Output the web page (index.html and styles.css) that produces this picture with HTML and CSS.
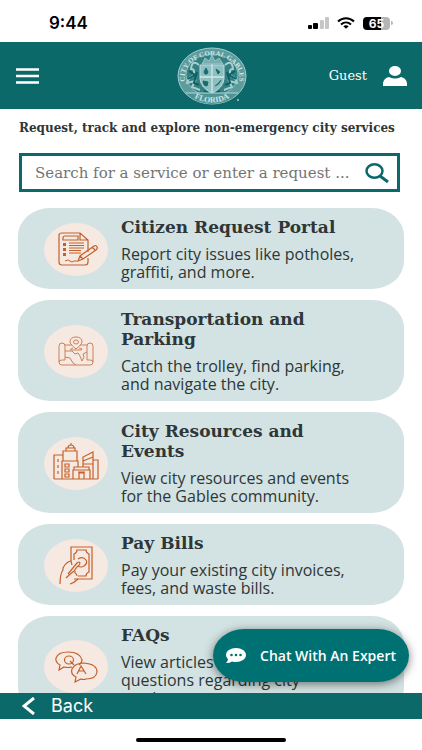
FILE: index.html
```html
<!DOCTYPE html>
<html lang="en">
<head>
    <meta charset="UTF-8">
    <meta name="viewport" content="width=device-width, initial-scale=1.0">
    <title>City of Coral Gables</title>
    <link rel="stylesheet" href="styles.css">
</head>
<body>
    <div class="status-bar">
        <span class="time">9:44</span>
        <div class="status-icons">
            <svg width="21" height="12" viewBox="0 0 21 12">
                <rect x="0" y="8" width="4" height="4" rx="1" fill="#000"/>
                <rect x="5" y="6" width="5" height="6" rx="1" fill="#000"/>
                <rect x="12" y="3" width="4" height="9" rx="1" fill="#c6c6c6"/>
                <rect x="17" y="0" width="4" height="12" rx="1" fill="#c6c6c6"/>
            </svg>
            <svg width="18" height="12" viewBox="0 0 18 12" fill="none" stroke="#000" stroke-width="2">
                <path d="M1 4.500C5.500 0 12.500 0 17 4.500M4 7.500C7 4.700 11 4.700 14 7.500"/>
                <path d="M6.300 9.200C8 7.900 10 7.900 11.700 9.200L9 11.800Z" fill="#000" stroke="none"/>
            </svg>
            <div class="battery"><span>65</span></div>
        </div>
    </div>

    <header class="header">
        <button class="menu-button" aria-label="Menu">
            <svg width="23" height="16" viewBox="0 0 23 16" stroke="#fff" stroke-width="2.500"><path d="M0 1.500H23M0 8H23M0 14.500H23"/></svg>
        </button>
        <svg class="seal" width="70" height="58" viewBox="0 0 70 58">
            <defs>
                <path id="ring-top" d="M8.500 37A27.500 22.500 0 1 1 61.500 37"/>
                <path id="ring-bottom" d="M14 49Q35 62 56 49"/>
            </defs>
            <ellipse cx="35" cy="29" rx="34" ry="28" fill="#5b9c9d" stroke="#a4cccd"/>
            <ellipse cx="35" cy="28" rx="26" ry="21" fill="#347f81" stroke="#9bc6c7" stroke-width=".8"/>
            <text class="seal-text"><textPath href="#ring-top" startOffset="50%" text-anchor="middle">CITY OF CORAL GABLES</textPath></text>
            <path d="M23 18H47V32Q46 41 35 46Q24 41 23 32Z" fill="#8dbfc0" stroke="#c0dcdd"/>
            <path d="M35 10V46M23 30H47" stroke="#d2e8e8" stroke-width="1.300"/>
            <path d="M27 25l2-4 2 4-1 2h-2zM39 22l4 3-2 2zM26 34l5 1-1 4-3-1zM38 39q4-1 6-6" fill="#176c6e" stroke="#176c6e"/>
            <path d="M25 17L28 11L32 14L35 8L38 14L42 11L46 17Z" fill="#74aeaf" stroke="#b1d3d4" stroke-width=".7"/>
            <path d="M22 18Q15 12 14 22Q19 22 16 29Q11 31 10 36L18 34L15 40L23 43M48 18Q55 12 56 22Q51 22 54 29Q59 31 60 36L52 34L55 40L47 43" fill="none" stroke="#a6cecf" stroke-width="2"/>
            <path d="M12 24l6 4-7 4M20 25l-3 11 5 2M58 24l-6 4 7 4M50 25l3 11-5 2M27 44l4 2M43 44l-4 2" fill="none" stroke="#0b6264" stroke-width="2"/>
            <path d="M9 46H61Q51 57 35 57Q19 57 9 46Z" fill="#4f9394"/>
            <path d="M9 46H61" stroke="#b8d8d9"/>
            <text class="seal-text seal-state"><textPath href="#ring-bottom" startOffset="50%" text-anchor="middle">FLORIDA</textPath></text>
            <circle cx="61" cy="53" r="1" fill="#a4cccd"/>
        </svg>
        <a class="guest" href="#">
            <span>Guest</span>
            <svg width="24" height="20" viewBox="0 0 24 20" fill="#fff"><ellipse cx="12" cy="5" rx="6" ry="5"/><path d="M0 20V17Q1 12 6 11Q12 14 18 11Q23 12 24 17V20Z"/></svg>
        </a>
    </header>

    <main class="content">
        <section class="search-section">
            <h1 class="intro"><label for="search">Request, track and explore non-emergency city services</label></h1>
            <form class="search-box">
                <input id="search" type="text" placeholder="Search for a service or enter a request ...">
                <button type="button" aria-label="Search">
                    <svg width="24" height="20" viewBox="0 0 24 20" fill="none" stroke="#0b696a" stroke-width="2.500"><ellipse cx="9.500" cy="8" rx="8" ry="6.700"/><path d="M15 13L23 19" stroke-width="3"/></svg>
                </button>
            </form>
        </section>

        <section class="cards">
            <a class="card" href="#">
                <span class="card-icon">
                    <svg width="64" height="53" viewBox="0 0 64 53">
                        <path d="M44 35V39Q44 42 41 42H18Q15 42 15 39V12Q15 10 18 10H36L44 17V29M36 10V17H44M34 13H21Q19 13 19 15V17H34Z"/>
                        <path d="M25 20H40M25 22.500H40M25 25H40M25 27.500H37M25 30H37M21 38Q24 36 26 38T30 38H33" stroke-width="1"/>
                        <path class="solid" d="M19 20h3v3h-3zM19 25h3v3h-3zM19 30h3v3h-3z"/>
                        <path d="M34 38L36 33L50 23Q52 22 53 24Q54 25 52 27L39 36ZM36 33L39 36M48 24L51 27"/>
                    </svg>
                </span>
                <span class="card-text">
                    <span class="card-title">Citizen Request Portal</span>
                    <span class="card-description">Report city issues like potholes, graffiti, and more.</span>
                </span>
            </a>
            <a class="card" href="#">
                <span class="card-icon">
                    <svg class="thin" width="64" height="53" viewBox="0 0 64 53">
                        <path d="M21 21Q21 18 18 18Q15 18 15 21V37Q15 40 18 40H46Q49 40 49 37V21Q49 18 46 18Q43 18 43 21V35M21 21V35M15 37Q15 35 18 35H21M49 37Q49 35 46 35H43M21 20H28M36 20H43"/>
                        <path d="M32 24Q26 19 26 17Q26 12 32 12Q38 12 38 17Q38 19 32 24Z"/><ellipse cx="32" cy="17" rx="2.500" ry="2"/>
                        <path d="M29 23Q24 25 28 25H37Q40 24 35 23M21 26H28L31 29L34 28L36 31L38 36L40 32L39 29L43 27M21 32L26 33L29 38L32 40"/>
                    </svg>
                </span>
                <span class="card-text">
                    <span class="card-title">Transportation and Parking</span>
                    <span class="card-description">Catch the trolley, find parking, and navigate the city.</span>
                </span>
            </a>
            <a class="card" href="#">
                <span class="card-icon">
                    <svg width="64" height="53" viewBox="0 0 64 53">
                        <path d="M10 42H54M10 42V18H19V24M14 22V25M14 28V31M14 34V37M19 18V14H33V24M22 14V11H31V14M24 11Q24 8 27 8Q30 8 30 11M27 8V6"/>
                        <path d="M18 42V24H34V30M21 27H25V30H21ZM21 32H25V35H21ZM21 37H25V40H21Z"/>
                        <path d="M29 42V33H46V42M30 30H45V33H30ZM34 35H41M35 42V36H40V42M39 30V20L49 15V42M39 24L49 20M39 27H49M49 23H54V42"/>
                    </svg>
                </span>
                <span class="card-text">
                    <span class="card-title">City Resources and Events</span>
                    <span class="card-description">View city resources and events for the Gables community.</span>
                </span>
            </a>
            <a class="card" href="#">
                <span class="card-icon">
                    <svg width="64" height="53" viewBox="0 0 64 53">
                        <path d="M27 22V8H48V40H30M30 21V15Q33 14 33 11H42Q42 14 45 15V33Q42 34 42 37H34M31 32V34Q33 35 33 37"/>
                        <path d="M16 45Q16 35 19 31V29Q22 23 27 22L28 26M24 35L33 24Q35 22 36 24Q36 26 33 28L30 32Q26 35 22 39M34 20Q39 17 42 21Q44 24 40 27Q37 29 34 27M26 45Q30 44 34 40"/>
                    </svg>
                </span>
                <span class="card-text">
                    <span class="card-title">Pay Bills</span>
                    <span class="card-description">Pay your existing city invoices, fees, and waste bills.</span>
                </span>
            </a>
            <a class="card" href="#">
                <span class="card-icon">
                    <svg width="64" height="53" viewBox="0 0 64 53">
                        <path d="M28 27Q24 28 20 27L15 30L16 25Q11 22 12 18Q14 12 24 12Q36 12 38 20Q38 23 35 25"/>
                        <path d="M40 23Q53 24 53 32Q52 39 42 39Q39 40 37 39L31 42L32 37Q26 34 28 29Q31 23 40 23Z"/>
                        <ellipse cx="25" cy="20" rx="4.500" ry="4"/><path d="M26 21L30 25M33 34L37 26L42 34M35 31H40"/>
                    </svg>
                </span>
                <span class="card-text">
                    <span class="card-title">FAQs</span>
                    <span class="card-description">View articles and common questions regarding city services.</span>
                </span>
            </a>
        </section>

        <button class="chat-button">
            <svg width="20" height="16" viewBox="0 0 20 16"><path fill="#fff" d="M10 0C4.500 0 0 3 0 7Q0 9.500 2 11.300Q2 13 0 15Q4 15 6 13.500Q8 14 10 14C15.500 14 20 11 20 7S15.500 0 10 0Z"/><g fill="#007172"><circle cx="5.500" cy="7" r="1.300"/><circle cx="10" cy="7" r="1.300"/><circle cx="14.500" cy="7" r="1.300"/></g></svg>
            Chat With An Expert
        </button>
    </main>

    <nav class="back-bar">
        <a href="#">
            <svg width="13" height="18" viewBox="0 0 13 18" fill="none" stroke="#fff" stroke-width="3"><path d="M12 1L2 9L12 17"/></svg>
            Back
        </a>
    </nav>
    <div class="home-area"><div class="home-indicator"></div></div>
</body>
</html>
```
FILE: styles.css
```css
* {
    box-sizing: border-box;
}
body {
    display: flex;
    flex-direction: column;
    height: 100vh;
    margin: 0;
    background-color: #fff;
    color: #2e3637;
    font-family: "Open Sans", sans-serif;
}
button {
    padding: 0;
    border: 0;
    background: none;
    cursor: pointer;
}
a {
    color: inherit;
    text-decoration: none;
}
svg {
    display: block;
    flex-shrink: 0;
}

/* Status bar */
.status-bar {
    display: flex;
    flex-shrink: 0;
    justify-content: space-between;
    align-items: center;
    height: 42px;
    padding: 4px 32px 0 49px;
}
.time {
    color: #000;
    font: 600 17px/20px Inter, sans-serif;
}
.status-icons {
    display: flex;
    align-items: center;
    gap: 8px;
}
.battery {
    position: relative;
    width: 27px;
    height: 13px;
    border-radius: 4px;
    background: linear-gradient(to right, #000 65%, #b5b5b5 65%);
    color: #fff;
    font: 700 12px/13px Inter, sans-serif;
    text-align: center;
}
.battery::after {
    content: "";
    position: absolute;
    top: 4px;
    right: -3px;
    width: 2px;
    height: 4px;
    border-radius: 0 2px 2px 0;
    background-color: #b5b5b5;
}

/* Header */
.header {
    display: grid;
    grid-template-columns: 1fr auto 1fr;
    flex-shrink: 0;
    align-items: center;
    height: 67px;
    padding: 0 15px 0 16px;
    background-color: #0b696a;
    color: #fff;
}
.menu-button {
    justify-self: start;
}
.seal-text {
    fill: #d2e6e6;
    font: bold 7px "Liberation Serif", serif;
}
.seal-state {
    font-size: 8px;
}
.guest {
    display: flex;
    justify-self: end;
    align-items: center;
    gap: 16px;
    font: 13px/20px "DejaVu Serif", serif;
}

/* Search */
.content {
    position: relative;
    flex: 1;
    min-height: 0;
    overflow: hidden;
}
.search-section {
    padding: 9px 22px 16px 19px;
}
.intro {
    margin: 0 0 15px;
    font: bold 12px/20px "DejaVu Serif", serif;
    white-space: nowrap;
}
.search-box {
    display: flex;
    align-items: center;
    height: 39px;
    padding: 0 8px 0 13px;
    border: 3px solid #0b696a;
    background-color: #fff;
}
.search-box input {
    flex: 1;
    min-width: 0;
    padding: 0;
    border: 0;
    outline: 0;
    background: none;
    font: 15px/20px "DejaVu Serif", serif;
}
.search-box input::placeholder {
    color: #747474;
    opacity: 1;
}

/* Cards */
.cards {
    display: flex;
    flex-direction: column;
    gap: 11px;
    padding: 0 18px;
}
.card {
    display: flex;
    align-items: center;
    gap: 13px;
    padding: 9px 42px 8px 26px;
    border-radius: 32px / 28px;
    background-color: #d3e2e2;
}
.card-icon {
    flex-shrink: 0;
    border-radius: 50%;
    background-color: #f6e9e2;
}
.card-icon svg {
    fill: none;
    stroke: #c4602a;
    stroke-width: 1.2;
}
.card-icon .thin {
    stroke: #cc8059;
    stroke-width: 1;
}
.card-icon .solid {
    fill: #c4602a;
    stroke: none;
}
.card-text {
    display: flex;
    flex: 1;
    flex-direction: column;
    gap: 8px;
}
.card-title {
    font: bold 17px/20px "DejaVu Serif", serif;
}
.card-description {
    font-size: 16px;
    line-height: 18px;
}

/* Floating chat button */
.chat-button {
    position: absolute;
    right: 13px;
    bottom: 11px;
    display: flex;
    align-items: center;
    gap: 14px;
    height: 53px;
    padding: 0 13px;
    border-radius: 32px / 27px;
    background-color: #007172;
    box-shadow: 0 2px 10px rgba(0, 0, 0, 0.5);
    color: #fff;
    font: 600 14px/20px "Open Sans", sans-serif;
    white-space: nowrap;
}

/* Bottom */
.back-bar {
    display: flex;
    flex-shrink: 0;
    align-items: center;
    height: 26px;
    padding: 0 22px;
    background-color: #0b696a;
    color: #fff;
}
.back-bar a {
    display: flex;
    align-items: center;
    gap: 16px;
    font: 18px/20px Inter, sans-serif;
}
.home-area {
    display: flex;
    flex-shrink: 0;
    justify-content: center;
    align-items: flex-end;
    height: 31px;
    padding-bottom: 8px;
}
.home-indicator {
    width: 150px;
    height: 4px;
    border-radius: 2px;
    background-color: #000;
}
```
